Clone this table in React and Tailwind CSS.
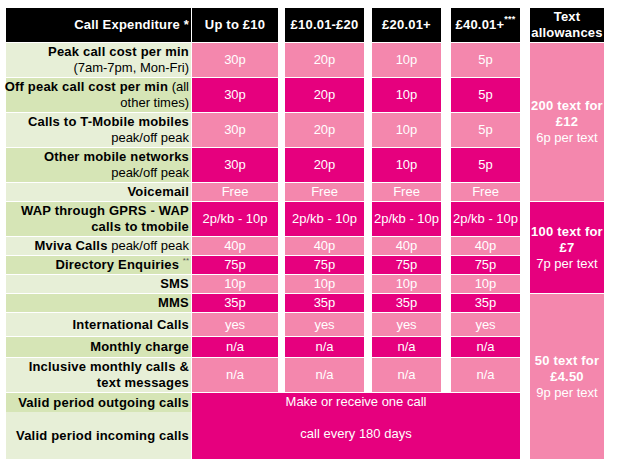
const PINK = "bg-[#f487ad]";
const MAGENTA = "bg-[#e6007e]";
const LABEL_LIGHT = "bg-[#e7efd7]";
const LABEL_DARK = "bg-[#d6e5b6]";

// explicit grid placement, every class written in full
const ROW_START = [
  "row-start-1", "row-start-2", "row-start-3", "row-start-4",
  "row-start-5", "row-start-6", "row-start-7", "row-start-8",
  "row-start-9", "row-start-10", "row-start-11", "row-start-12",
  "row-start-13", "row-start-14", "row-start-15", "row-start-16",
];
const VAL_COLS = ["col-start-3", "col-start-5", "col-start-7", "col-start-9"];

const B = ({ children }) => (
  <span className="font-bold tracking-[0.2px]">{children}</span>
);

const rows = [
  {
    label: (
      <>
        <B>Peak call cost per min</B>
        <br />
        (7am-7pm, Mon-Fri)
      </>
    ),
    vals: ["30p", "20p", "10p", "5p"],
  },
  {
    label: (
      <>
        <B>Off peak call cost per min</B> (all
        <br />
        other times)
      </>
    ),
    vals: ["30p", "20p", "10p", "5p"],
  },
  {
    label: (
      <>
        <B>Calls to T-Mobile mobiles</B>
        <br />
        peak/off peak
      </>
    ),
    vals: ["30p", "20p", "10p", "5p"],
  },
  {
    label: (
      <>
        <B>Other mobile networks</B>
        <br />
        peak/off peak
      </>
    ),
    vals: ["30p", "20p", "10p", "5p"],
  },
  { label: <B>Voicemail</B>, vals: ["Free", "Free", "Free", "Free"] },
  {
    label: (
      <>
        <B>WAP through GPRS - WAP</B>
        <br />
        <B>calls to tmobile</B>
      </>
    ),
    vals: ["2p/kb - 10p", "2p/kb - 10p", "2p/kb - 10p", "2p/kb - 10p"],
  },
  {
    label: (
      <>
        <B>Mviva Calls</B> peak/off peak
      </>
    ),
    vals: ["40p", "40p", "40p", "40p"],
  },
  {
    label: (
      <>
        <B>Directory Enquiries</B>{" "}
        <span className="align-top text-[8px] leading-none text-[#555]">**</span>
      </>
    ),
    vals: ["75p", "75p", "75p", "75p"],
  },
  { label: <B>SMS</B>, vals: ["10p", "10p", "10p", "10p"] },
  { label: <B>MMS</B>, vals: ["35p", "35p", "35p", "35p"] },
  { label: <B>International Calls</B>, vals: ["yes", "yes", "yes", "yes"] },
  { label: <B>Monthly charge</B>, vals: ["n/a", "n/a", "n/a", "n/a"] },
  {
    label: (
      <>
        <B>Inclusive monthly calls &amp;</B>
        <br />
        <B>text messages</B>
      </>
    ),
    vals: ["n/a", "n/a", "n/a", "n/a"],
  },
];

const headers = [
  { col: "col-start-3", text: "Up to £10" },
  { col: "col-start-5", text: "£10.01-£20" },
  { col: "col-start-7", text: "£20.01+" },
  {
    col: "col-start-9",
    text: (
      <>
        £40.01+<span className="align-top text-[9px] leading-none">***</span>
      </>
    ),
  },
];

const Allowance = ({ place, bg, big, price, per }) => (
  <div
    className={`col-start-11 ${place} ${bg} flex flex-col items-center justify-center text-center leading-4 text-white`}
  >
    <B>{big}</B>
    <B>{price}</B>
    <span>{per}</span>
  </div>
);

export default function App() {
  return (
    <div className="min-h-screen bg-white pl-[6px] pt-[8px] font-['Liberation_Sans',Arial,sans-serif] text-[13px]">
      <div className="grid w-fit grid-cols-[185px_1px_86px_7px_79px_8px_69px_10px_69px_10px_74px] grid-rows-[34px_34px_34px_34px_34px_18px_34px_18px_18px_18px_18px_23px_20px_34px_18px_47px] gap-y-px bg-white">
        {/* Header */}
        <div className="col-start-1 row-start-1 flex items-center justify-end bg-black pr-[2px] text-white">
          <B>Call Expenditure *</B>
        </div>
        {headers.map((h, i) => (
          <div
            key={i}
            className={`${h.col} row-start-1 flex items-center justify-center whitespace-nowrap bg-black text-white`}
          >
            <span className="font-bold tracking-[0.2px]">{h.text}</span>
          </div>
        ))}
        <div className="col-start-11 row-start-1 flex flex-col items-center justify-center bg-black text-center leading-4 text-white">
          <B>Text</B>
          <B>allowances</B>
        </div>

        {/* Price rows */}
        {rows.map((r, i) => {
          const dark = i % 2 === 1;
          const rowCls = ROW_START[i + 1];
          return [
            <div
              key={`l${i}`}
              className={`col-start-1 ${rowCls} ${dark ? LABEL_DARK : LABEL_LIGHT} flex items-center justify-end whitespace-nowrap pr-[2px] text-right leading-4 text-black`}
            >
              <div>{r.label}</div>
            </div>,
            ...r.vals.map((v, j) => (
              <div
                key={`v${i}-${j}`}
                className={`${VAL_COLS[j]} ${rowCls} ${dark ? MAGENTA : PINK} flex items-center justify-center whitespace-nowrap text-white`}
              >
                {v}
              </div>
            )),
          ];
        })}

        {/* Valid period rows */}
        <div className={`col-start-1 row-start-15 row-span-2 flex flex-col text-right leading-4 text-black`}>
          <div className={`${LABEL_DARK} flex h-[19px] items-center justify-end pr-[2px]`}>
            <B>Valid period outgoing calls</B>
          </div>
          <div className={`${LABEL_LIGHT} flex flex-1 items-center justify-end pr-[2px]`}>
            <B>Valid period incoming calls</B>
          </div>
        </div>
        <div className={`col-start-3 col-end-10 row-start-15 row-span-2 ${MAGENTA} flex flex-col items-center pt-px text-center leading-4 text-white`}>
          <span>Make or receive one call</span>
          <span>&nbsp;</span>
          <span>call every 180 days</span>
        </div>

        {/* Text allowances */}
        <Allowance place="row-start-2 row-span-5" bg={PINK} big="200 text for" price="£12" per="6p per text" />
        <Allowance place="row-start-7 row-span-4" bg={MAGENTA} big="100 text for" price="£7" per="7p per text" />
        <Allowance place="row-start-11 row-span-6" bg={PINK} big="50 text for" price="£4.50" per="9p per text" />
      </div>
    </div>
  );
}
